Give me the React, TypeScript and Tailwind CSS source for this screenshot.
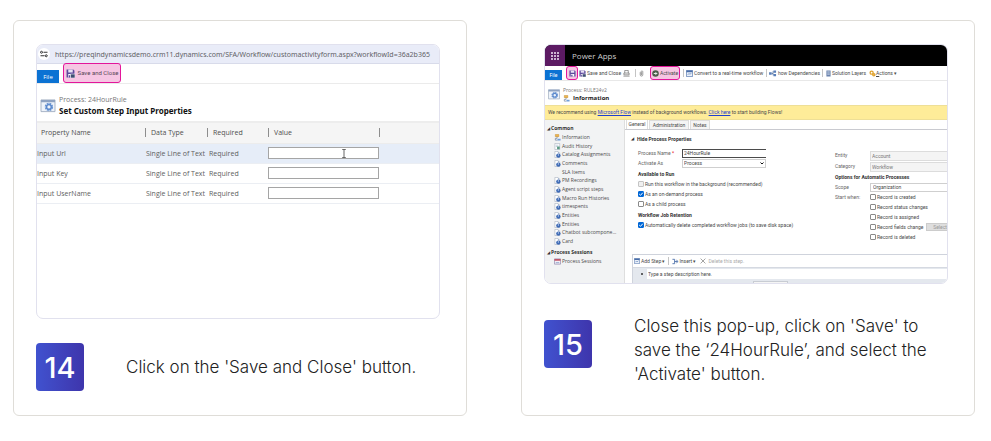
import type { ReactNode } from "react";

const ui = "font-['Open_Sans','Noto_Sans',sans-serif] font-normal";
const compact = "font-[Roboto,'Open_Sans',sans-serif]";

function SaveIcon({ className, pen = false }: { className: string; pen?: boolean }) {
  return (
    <svg viewBox="0 0 16 16" className={className} aria-hidden="true">
      <path d="M1 1h12l2 2v12H1z" fill="#5d4a9c" />
      <path d="M4 1h8v5H4z" fill="#e9e2f5" />
      <path d="M4 9h8v6H4z" fill="#fff" />
      <path d="M5 11h3v4H5z" fill="#5d4a9c" />
      {pen && <path d="M8 9h8v7H8z" fill="#3f4f73" stroke="#fff" strokeWidth="1" />}
    </svg>
  );
}

function ProcessIcon({ className }: { className: string }) {
  return (
    <svg viewBox="0 0 32 30" className={className} aria-hidden="true">
      <path d="M1 2h30v25H1z" fill="#eef3fa" stroke="#a3afc2" strokeWidth="2" />
      <path d="M1 2h30v5H1z" fill="#8fa3c2" />
      <circle cx="18" cy="17" r="7" fill="none" stroke="#6d97d3" strokeWidth="4" strokeDasharray="4 1.5" />
      <circle cx="18" cy="17" r="5" fill="none" stroke="#5a88cc" strokeWidth="3" />
    </svg>
  );
}

function FlowIcon({ className }: { className: string }) {
  return (
    <svg viewBox="0 0 16 16" className={className} aria-hidden="true">
      <path d="M3 1h8v5H3z" fill="#f0b64a" stroke="#b98325" />
      <path d="M7 6v4h-4v4h5" fill="none" stroke="#6b7c99" strokeWidth="1.5" />
      <path d="M8 11h7v4H8z" fill="#6f9fdc" />
    </svg>
  );
}

function EntityIcon({ className }: { className: string }) {
  return (
    <svg viewBox="0 0 16 16" className={className} aria-hidden="true">
      <path d="M2 1h7l4 4v10H2z" fill="#fff" stroke="#8b97ab" />
      <path d="M9 1l4 4H9z" fill="#9fb1cd" />
      <circle cx="10" cy="10.500" r="5" fill="#3f6bb5" />
      <circle cx="10" cy="9" r="1.500" fill="#d5e3f7" />
    </svg>
  );
}

function AuditIcon({ className }: { className: string }) {
  return (
    <svg viewBox="0 0 16 16" className={className} aria-hidden="true">
      <path d="M2 1h11v14H2z" fill="#fff" stroke="#8b97ab" />
      <path d="M4 5h6M4 8h4" stroke="#7b93b8" />
      <path d="M7 8h6v6H7z" fill="#5b9a83" />
    </svg>
  );
}

function SessionIcon({ className }: { className: string }) {
  return (
    <svg viewBox="0 0 16 16" className={className} aria-hidden="true">
      <path d="M1 2h14v12H1z" fill="#f5f0f6" stroke="#8a7ea6" strokeWidth="1.500" />
      <path d="M1 2h14v4H1z" fill="#c0566a" />
      <path d="M4 9h8v3H4z" fill="#a8b8d6" />
    </svg>
  );
}

function WindowIcon({ className }: { className: string }) {
  return (
    <svg viewBox="0 0 16 16" className={className} aria-hidden="true">
      <path d="M1 1h14v14H1z" fill="#eaf1fb" stroke="#486da8" strokeWidth="1.500" />
      <path d="M1 1h14v4H1z" fill="#486da8" />
      <path d="M4 11l3-3 2 2 3-3" fill="none" stroke="#486da8" strokeWidth="1.500" />
    </svg>
  );
}

function Step({ number, children }: { number: number; children: ReactNode }) {
  return (
    <div className="flex gap-[42px]">
      <div className="flex size-12 shrink-0 items-center justify-center rounded-[4px] bg-gradient-to-r from-[#4052cf] to-[#3e35ac] text-[29px] leading-none font-medium text-white">
        {number}
      </div>
      {children}
    </div>
  );
}

const properties = ["Input Url", "Input Key", "Input UserName"];

function PropertiesShot() {
  return (
    <div className={`h-[275px] overflow-hidden rounded-[7px] border border-[#e1e1ee] bg-white text-[7px] leading-none text-[#606060] ${ui}`}>
      <div className="flex h-[19px] items-center gap-[5px] border-b border-[#d8dbea] bg-[#e9ecf8] pl-px">
        <div className="flex size-3 shrink-0 items-center justify-center rounded-full bg-white">
          <svg viewBox="0 0 16 16" className="size-2" fill="none" stroke="#333" strokeWidth="2" aria-hidden="true">
            <circle cx="3" cy="4.500" r="2" />
            <path d="M7 4.500h8M1 11.500h8" />
            <circle cx="12.500" cy="11.500" r="2" />
          </svg>
        </div>
        <span className="font-['Noto_Sans',sans-serif] whitespace-nowrap text-[#626267]">
          https://preqindynamicsdemo.crm11.dynamics.com/SFA/Workflow/customactivityform.aspx?workflowId=36a2b365
        </span>
      </div>
      <div className="flex h-5 items-end gap-1 border-b border-[#ebebeb]">
        <button className="h-[13px] w-[22px] bg-[#0b72d3] text-[6px] text-white">File</button>
        <div className="flex h-5 items-center">
          <button className="flex h-5 w-[58px] items-center justify-center gap-[3px] rounded-[3px] border border-[#e3169b] bg-[#f6c6e3] font-[Roboto,sans-serif] text-[6px] whitespace-nowrap text-[#574658]">
            <SaveIcon className="size-[9px] shrink-0" pen />
            Save and Close
          </button>
        </div>
      </div>
      <div className="flex h-[37px] items-center gap-[3px] pt-[6px] pl-[3px]">
        <ProcessIcon className="h-[14px] w-4" />
        <div className="flex flex-col gap-1">
          <span className="text-[#777]">Process: 24HourRule</span>
          <h2 className="font-['Noto_Sans',sans-serif] text-[8px] font-bold text-[#111]">Set Custom Step Input Properties</h2>
        </div>
      </div>
      <table className="w-full table-fixed border-collapse text-left">
        <colgroup>
          <col className="w-[108px]" />
          <col className="w-[62px]" />
          <col className="w-[61px]" />
          <col className="w-[111px]" />
          <col />
        </colgroup>
        <thead>
          <tr className="h-[21px] border-t-2 border-b border-t-[#ededed] border-b-[#ececec] bg-[#f5f5f5] text-[#4e4e4e]">
            <th className="p-0 pl-1 font-medium">Property Name</th>
            {["Data Type", "Required", "Value"].map((h) => (
              <th key={h} className="p-0 font-medium">
                <div className="flex h-[9px] items-center border-l border-[#8d8d8d] pl-[5px]">{h}</div>
              </th>
            ))}
            <th className="p-0" aria-label="More">
              <div className="h-[9px] border-l border-[#8d8d8d]" />
            </th>
          </tr>
        </thead>
        <tbody>
          {properties.map((name, i) => (
            <tr key={name} className={`h-5 border-b border-[#ebeef3] ${i === 0 ? "bg-[#e6edf8]" : ""}`}>
              <td className="p-0">
                <label htmlFor={`value-${i}`}>{name}</label>
              </td>
              <td className="p-0 pl-px whitespace-nowrap">Single Line of Text</td>
              <td className="p-0 pl-[2px]">Required</td>
              <td className="p-0">
                <div className="relative">
                  <input
                    id={`value-${i}`}
                    className="block h-3 w-[111px] border border-[#a5a5a5] bg-white px-1"
                  />
                  {i === 0 && (
                    <svg viewBox="0 0 6 10" className="absolute top-[2px] left-[73px] h-[9px] w-[6px]" fill="none" stroke="#555" aria-hidden="true">
                      <path d="M1 .5h4M3 .5v9M1 9.500h4" />
                    </svg>
                  )}
                </div>
              </td>
              <td className="p-0" />
            </tr>
          ))}
        </tbody>
      </table>
    </div>
  );
}

const navItems = [
  "Information",
  "Audit History",
  "Catalog Assignments",
  "Comments",
  "SLA Items",
  "PM Recordings",
  "Agent script steps",
  "Macro Run Histories",
  "timespents",
  "Entities",
  "Entities",
  "Chatbot subcompone...",
  "Card",
];

function NavIcon({ name }: { name: string }) {
  if (name === "Information") return <FlowIcon className="size-[7px]" />;
  if (name === "Audit History") return <AuditIcon className="size-[7px]" />;
  if (name === "SLA Items") return <span className="size-[7px]" />;
  return <EntityIcon className="size-[7px]" />;
}

function Check({ label, checked = false, disabled = false }: { label: string; checked?: boolean; disabled?: boolean }) {
  return (
    <label className="flex h-[10px] items-center gap-px whitespace-nowrap">
      <span className="relative size-[6px] shrink-0">
        <input
          type="checkbox"
          defaultChecked={checked}
          disabled={disabled}
          className="peer block size-[6px] appearance-none rounded-[1px] border border-[#8a8a8a] bg-white checked:border-[#0067d6] checked:bg-[#0067d6] disabled:border-[#c4c4c4] disabled:bg-[#f0f0f0]"
        />
        <svg viewBox="0 0 6 6" className="pointer-events-none absolute inset-0 hidden size-[6px] peer-checked:block" fill="none" stroke="#fff" aria-hidden="true">
          <path d="M1.200 3l1.300 1.300L4.800 1.700" />
        </svg>
      </span>
      {label}
    </label>
  );
}

function Divider() {
  return <span className="h-2 border-l border-[#c4c4c4]" />;
}

function Toolbar() {
  return (
    <div className={`flex h-[15px] shrink-0 items-end border-b border-[#e8e8e8] whitespace-nowrap ${compact}`}>
      <button className="h-[10px] w-[17px] shrink-0 bg-[#0b72d3] text-white">File</button>
      <div className="flex h-[14px] items-center pl-1">
        <button aria-label="Save" className="flex h-[14px] w-3 items-center justify-center rounded-[3px] border border-[#e3169b] bg-[#f6c6e3]">
          <SaveIcon className="size-[7px]" />
        </button>
        <button className="flex w-[45px] items-center gap-px pl-px">
          <SaveIcon className="size-[7px] shrink-0" pen />
          Save and Close
        </button>
        <button aria-label="Print" className="w-3">
          <svg viewBox="0 0 16 16" className="size-[7px]" fill="none" stroke="#666" strokeWidth="1.500" aria-hidden="true">
            <path d="M4 7V1h8v6M2 7h12v4H2zM1 14h14" />
          </svg>
        </button>
        <Divider />
        <button aria-label="Attach" className="flex w-[10px] justify-center">
          <svg viewBox="0 0 10 16" className="h-[7px] w-[5px]" fill="none" stroke="#777" strokeWidth="1.500" aria-hidden="true">
            <path d="M2 5v6a3 3 0 0 0 6 0V4a2 2 0 0 0-4 0v7h1.500V5" />
          </svg>
        </button>
        <span className="w-1" />
        <button className="flex h-[14px] w-[30px] items-center justify-center gap-px rounded-[3px] border border-[#e3169b] bg-[#f6c6e3]">
          <svg viewBox="0 0 16 16" className="size-[7px] shrink-0" aria-hidden="true">
            <circle cx="8" cy="8" r="7.500" fill="#4b5d4a" />
            <path d="M4 8h7M8 5l3 3-3 3" fill="none" stroke="#fff" strokeWidth="2" />
          </svg>
          Activate
        </button>
        <span className="w-[3px]" />
        <Divider />
        <button className="flex w-[82px] items-center gap-px pl-[2px]">
          <WindowIcon className="size-[7px] shrink-0" />
          Convert to a real-time workflow
        </button>
        <Divider />
        <button className="flex w-[55px] items-center gap-px pl-[2px]">
          <svg viewBox="0 0 18 16" className="h-[7px] w-2 shrink-0" aria-hidden="true">
            <path d="M0 5h6v6H0zM10 1h6v5h-6zM10 9h6v5h-6z" fill="#5a7fb8" />
            <path d="M6 8h3M9 3v9" fill="none" stroke="#3d5b8c" strokeWidth="1.500" />
          </svg>
          how Dependencies
        </button>
        <Divider />
        <button className="flex w-[46px] items-center gap-px pl-[3px]">
          <svg viewBox="0 0 12 16" className="h-[7px] w-[5px] shrink-0" aria-hidden="true">
            <path d="M1 1h10v14H1z" fill="#6b83ad" />
            <path d="M3 4h6M3 7h6M3 10h6" stroke="#dfe8f6" strokeWidth="1.500" />
          </svg>
          Solution Layers
        </button>
        <button className="flex items-center">
          <svg viewBox="0 0 16 16" className="size-[7px] shrink-0" fill="none" stroke="#e0a22c" aria-hidden="true">
            <circle cx="6" cy="6" r="3.500" strokeWidth="3" />
            <circle cx="11" cy="11" r="2.500" strokeWidth="3" />
          </svg>
          <span className="underline">A</span>ctions ▾
        </button>
      </div>
    </div>
  );
}

function Field({ id, label, children }: { id: string; label: ReactNode; children: ReactNode }) {
  return (
    <div className="flex h-[10px] items-center">
      <label htmlFor={id} className="w-[44px] shrink-0 text-[#666]">
        {label}
      </label>
      {children}
    </div>
  );
}

function Shade({ id, label, value }: { id: string; label: string; value: string }) {
  return (
    <div className="flex h-[11px] items-center">
      <label htmlFor={id} className="w-[35px] shrink-0 text-[#666]">
        {label}
      </label>
      <input id={id} readOnly defaultValue={value} className="h-[10px] min-w-0 flex-1 border border-r-0 border-[#dcdcdc] bg-[#f4f4f4] px-px text-[#777]" />
    </div>
  );
}

function PowerAppsShot() {
  return (
    <div className={`flex h-60 flex-col overflow-hidden rounded-[7px] border border-[#e1e1ee] bg-white text-[5px] leading-none text-[#4a4a4a] ${ui}`}>
      <div className="flex h-[21px] shrink-0 items-center gap-[7px] bg-black">
        <div className="flex h-full w-5 items-center justify-center bg-[#5c1a63]">
          <div className="grid grid-cols-3 gap-px">
            {Array.from({ length: 9 }, (_, i) => (
              <span key={i} className="size-[2px] bg-[#cdb3d0]" />
            ))}
          </div>
        </div>
        <span className="text-[8px] text-[#ccc]">Power Apps</span>
      </div>
      <Toolbar />
      <div className="flex h-6 shrink-0 items-center gap-[3px] pt-[3px] pl-[3px]">
        <ProcessIcon className="h-[11px] w-3" />
        <div className="flex flex-col gap-[2px]">
          <span className="text-[#777]">Process: RULE24v2</span>
          <div className="flex items-center gap-[3px]">
            <FlowIcon className="size-[7px]" />
            <h2 className="text-[6px] font-bold text-[#222]">Information</h2>
          </div>
        </div>
      </div>
      <p className={`flex h-[15px] shrink-0 items-center border-y border-[#eedf97] bg-[#feec99] pl-[3px] whitespace-pre ${compact}`}>
        We recommend using <a href="#flow" className="text-[#1f3fd0] underline">Microsoft Flow</a> instead of background workflows. <a href="#start" className="text-[#1f3fd0] underline">Click here</a> to start building Flows!
      </p>
      <div className="flex min-h-0 flex-1">
        <nav className="w-20 shrink-0 border-r border-[#dedede] bg-[#f2f3f4] pt-1 pl-[2px]">
          <h3 className="flex h-[9px] items-center gap-px text-[5px] font-bold text-[#333]">
            <span className="text-[4px]">◢</span>Common
          </h3>
          <ul className="flex h-[113px] flex-col pl-[7px]">
            {navItems.map((name, i) => (
              <li key={i} className="flex flex-1 items-center gap-px whitespace-nowrap">
                <NavIcon name={name} />
                {name}
              </li>
            ))}
          </ul>
          <h3 className="mt-[2px] flex h-[9px] items-center gap-px text-[5px] font-bold text-[#333]">
            <span className="text-[4px]">◢</span>Process Sessions
          </h3>
          <div className="flex h-[9px] items-center gap-px pl-[7px]">
            <SessionIcon className="size-[7px]" />
            Process Sessions
          </div>
        </nav>
        <main className={`flex min-w-0 flex-1 flex-col ${compact}`}>
          <div className="flex h-[10px] shrink-0 items-end gap-px border-b border-[#c9cad0] pl-px">
            <button className="h-[9px] w-[22px] border-x border-[#ddd] bg-white">General</button>
            <button className="h-[9px] w-[40px] border border-b-0 border-[#ddd] bg-[#f4f4f4]">Administration</button>
            <button className="h-[9px] w-[20px] border border-b-0 border-[#ddd] bg-[#f4f4f4]">Notes</button>
          </div>
          <div className="flex h-[124px] shrink-0 justify-between">
            <div className="w-[150px] pt-1 pl-[13px]">
              <h3 className="-ml-[7px] flex h-[10px] items-center gap-[3px] font-bold text-[#333]">
                <span className="text-[4px]">◢</span>Hide Process Properties
              </h3>
              <div className="pt-1">
                <Field id="process-name" label={<>Process Name <span className="text-red-600">*</span></>}>
                  <input id="process-name" defaultValue="24HourRule" className="h-[9px] w-[84px] border-y border-l border-[#4b4b4b] bg-white px-px text-[#444]" />
                </Field>
                <Field id="activate-as" label="Activate As">
                  <div className="relative w-[84px]">
                    <select id="activate-as" className="block h-[9px] w-full appearance-none border border-[#cfcfcf] bg-white px-px">
                      <option>Process</option>
                    </select>
                    <svg viewBox="0 0 8 6" className="pointer-events-none absolute top-[3px] right-[2px] h-[3px] w-1" fill="none" stroke="#111" strokeWidth="2" aria-hidden="true">
                      <path d="M1 1l3 3 3-3" />
                    </svg>
                  </div>
                </Field>
              </div>
              <h4 className="mt-px flex h-[10px] items-center font-bold text-[#333]">Available to Run</h4>
              <Check label="Run this workflow in the background (recommended)" disabled />
              <Check label="As an on-demand process" checked />
              <Check label="As a child process" />
              <h4 className="mt-px flex h-[10px] items-center font-bold text-[#333]">Workflow Job Retention</h4>
              <Check label="Automatically delete completed workflow jobs (to save disk space)" checked />
            </div>
            <div className="w-[112px] shrink-0 pt-5">
              <Shade id="entity" label="Entity" value="Account" />
              <Shade id="category" label="Category" value="Workflow" />
              <h4 className="flex h-[10px] items-center font-bold whitespace-nowrap text-[#333]">Options for Automatic Processes</h4>
              <div className="flex h-[10px] items-center">
                <label htmlFor="scope" className="w-[35px] shrink-0 text-[#666]">Scope</label>
                <select id="scope" className="h-[9px] min-w-0 flex-1 appearance-none border border-r-0 border-[#cfcfcf] bg-white px-[2px]">
                  <option>Organization</option>
                </select>
              </div>
              <fieldset className="flex">
                <span className="flex h-[10px] w-[35px] shrink-0 items-center text-[#666]">Start when:</span>
                <div className="min-w-0 flex-1">
                  <Check label="Record is created" />
                  <Check label="Record status changes" />
                  <Check label="Record is assigned" />
                  <div className="flex items-center gap-[2px]">
                    <Check label="Record fields change" />
                    <button className="h-2 min-w-0 flex-1 border border-r-0 border-[#ccc] bg-[#dedede] text-right text-[#999]">Select</button>
                  </div>
                  <Check label="Record is deleted" />
                </div>
              </fieldset>
            </div>
          </div>
          <div className="ml-[7px] flex-1 border-t border-l border-[#cfd3dc] bg-[#e4e8ee]">
            <div className="flex h-[13px] items-center gap-[3px] border-b border-[#d5d9e1] bg-white whitespace-nowrap">
              <button className="flex items-center gap-px pl-px">
                <WindowIcon className="size-[6px]" />
                Add Step ▾
              </button>
              <Divider />
              <button className="flex items-center">
                <svg viewBox="0 0 16 14" className="size-[7px]" fill="none" stroke="#486da8" strokeWidth="2" aria-hidden="true">
                  <path d="M1 2h5v10H1M6 7h6M10 4l4 3-4 3" />
                </svg>
                Insert ▾
              </button>
              <button disabled className="flex items-center gap-[3px] text-[#aaa]">
                <svg viewBox="0 0 10 10" className="size-[6px]" fill="none" stroke="#666" aria-hidden="true">
                  <path d="M1 1l8 8M9 1L1 9" />
                </svg>
                Delete this step.
              </button>
            </div>
            <div className="flex h-[11px] items-center gap-1 pl-2">
              <span className="size-[2px] rounded-full bg-[#333]" />
              <input aria-label="Step description" defaultValue="Type a step description here." className="h-[10px] min-w-0 flex-1 bg-white px-px" />
            </div>
            <div className="pt-[2px] pl-[120px]">
              <div className="h-[7px] w-[35px] border border-[#c8ccd3] bg-[#f5f5f5]" />
            </div>
          </div>
        </main>
      </div>
    </div>
  );
}

export default function App() {
  return (
    <div className="grid grid-cols-2 gap-[54px] bg-white pt-5 pr-4 pb-6 pl-[13px] font-['Inter',sans-serif] text-[17px] leading-6 font-light text-[#222]">
      <section className="flex min-w-0 flex-col gap-6 rounded-[6px] border border-[#dfddd8] pt-[23px] pr-[26px] pb-6 pl-[22px]">
        <PropertiesShot />
        <Step number={14}>
          <p className="self-center">Click on the 'Save and Close' button.</p>
        </Step>
      </section>
      <section className="flex min-w-0 flex-col gap-9 rounded-[6px] border border-[#dfddd8] pt-[23px] pr-[26px] pb-6 pl-[22px]">
        <PowerAppsShot />
        <Step number={15}>
          <p className="-mt-[6px]">
            Close this pop-up, click on 'Save' to save the ‘24HourRule’, and select the 'Activate' button.
          </p>
        </Step>
      </section>
    </div>
  );
}
